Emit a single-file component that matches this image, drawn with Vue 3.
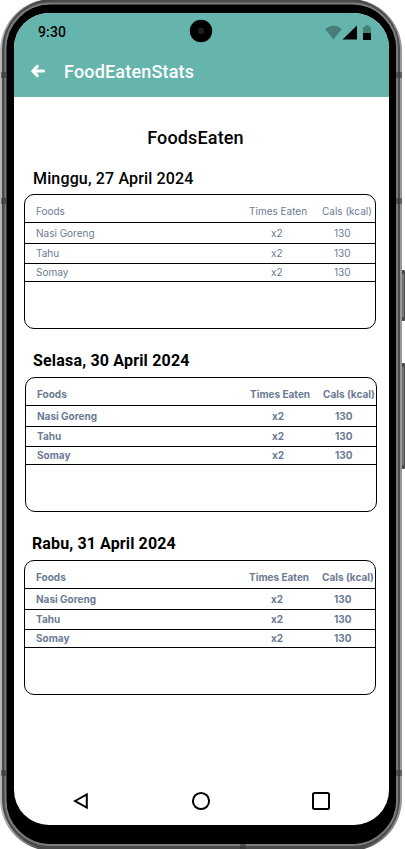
<script setup>
const foods = [
  { name: 'Nasi Goreng', times: 'x2', cals: '130' },
  { name: 'Tahu', times: 'x2', cals: '130' },
  { name: 'Somay', times: 'x2', cals: '130' },
]
const days = [
  { date: 'Minggu, 27 April 2024', variant: 'regular', foods },
  { date: 'Selasa, 30 April 2024', variant: 'bold shifted', foods },
  { date: 'Rabu, 31 April 2024', variant: 'bold last', foods },
]
</script>

<template>
  <div class="device">
    <svg class="frame" width="405" height="849" viewBox="0 0 405 849">
      <defs>
        <linearGradient id="side" x1="0" x2="1" y1="0" y2="0">
          <stop offset="0" stop-color="#b9bbba" />
          <stop offset=".1" stop-color="#4a4a4a" />
          <stop offset=".9" stop-color="#4a4a4a" />
          <stop offset="1" stop-color="#9a9a9b" />
        </linearGradient>
      </defs>
      <g fill="#4c4b4b">
        <rect x="400" y="270" width="5" height="51" rx="1" />
        <rect x="400" y="363" width="5" height="106" rx="1" />
      </g>
      <g fill="#777677">
        <rect x="402" y="274" width="2" height="43" />
        <rect x="402" y="367" width="2" height="98" />
      </g>
      <rect x="0" y="-1" width="402" height="852" rx="52" fill="url(#side)" />
      <rect x="2.5" y=".5" width="397" height="848" rx="49" fill="#4a4a4b" stroke="#4a4a4a" />
      <rect x="5.500" y="3.500" width="391.500" height="841.500" rx="45" fill="#000" stroke="#7b7a7c" stroke-width="2" />
      <rect x="7" y="5" width="389" height="839" rx="44" fill="#000" />
      <g fill="#333" opacity=".55">
        <rect x="1" y="72" width="6" height="6" />
        <rect x="1" y="198" width="6" height="6" />
        <rect x="1" y="770" width="6" height="6" />
        <rect x="396" y="72" width="6" height="6" />
        <rect x="396" y="198" width="6" height="6" />
        <rect x="396" y="770" width="6" height="6" />
        <rect x="240" y="844" width="6" height="5" />
      </g>
    </svg>

    <main class="screen">
      <header class="topbar">
        <div class="status">
          <span class="time">9:30</span>
          <svg class="status-icons" width="48" height="18" viewBox="0 0 48 18">
            <path d="M0 5Q8.500-2 17 5L8.500 15.500Z" fill="#000" opacity=".3" />
            <path d="M17.500 15.600L32 1.500V15.600Z" />
            <path d="M38 3H40V1.200H44V3H46V9H38Z" opacity=".3" />
            <path d="M38 9H46V16H38Z" />
          </svg>
        </div>
        <div class="titlebar">
          <svg class="back" width="14" height="14" viewBox="0 0 14 14">
            <path d="M6.300 2.400L1.800 7L6.300 11.600M2.500 7H12.500" fill="none" stroke="#fff" stroke-width="3" stroke-linecap="round" stroke-linejoin="round" />
          </svg>
          <span class="app-title">FoodEatenStats</span>
        </div>
      </header>

      <h1>FoodsEaten</h1>

      <section v-for="day in days" :key="day.date" class="day" :class="day.variant">
        <h2>{{ day.date }}</h2>
        <div class="table">
          <div class="row head">
            <span>Foods</span><span class="times">Times Eaten</span><span class="cals">Cals (kcal)</span>
          </div>
          <div v-for="food in day.foods" :key="food.name" class="row">
            <span>{{ food.name }}</span><span class="times value">{{ food.times }}</span><span class="cals value">{{ food.cals }}</span>
          </div>
        </div>
      </section>

      <nav class="navbar">
        <svg width="20" height="20" viewBox="0 0 20 20"><path d="M4 10L15.800 3.400V16.600Z" /></svg>
        <svg width="20" height="20" viewBox="0 0 20 20"><circle cx="10" cy="10" r="8.100" /></svg>
        <svg width="20" height="20" viewBox="0 0 20 20"><rect x="2" y="2" width="16" height="16" rx="1.500" /></svg>
      </nav>
    </main>

    <svg class="camera" width="24" height="24" viewBox="0 0 24 24">
      <circle cx="12" cy="12" r="11.200" />
      <circle cx="12" cy="12" r="3.500" fill="#141212" />
      <path d="M10 10.500Q12 9 14 10.500M10 13H14" fill="none" stroke="#352a29" />
    </svg>
  </div>
</template>

<style>
body { margin: 0; overflow: hidden; background: #fff; }
</style>

<style scoped>
.device {
  position: relative;
  width: 405px;
  height: 849px;
  box-sizing: border-box;
  padding: 13px 16px 24px 14px;
  overflow: hidden;
  font-family: Roboto, sans-serif;
}
.frame { position: absolute; left: 0; top: 0; }
.camera { position: absolute; left: 189px; top: 19px; }
.screen {
  position: relative;
  display: flex;
  flex-direction: column;
  width: 375px;
  height: 812px;
  border-radius: 35px;
  overflow: hidden;
  background: #fff;
}
.topbar { height: 84px; flex: none; background: #65b5ac; }
.status {
  display: flex;
  justify-content: space-between;
  padding: 11px 16px 0 24px;
  height: 18px;
}
.time { font-size: 14px; line-height: 16px; font-weight: 500; letter-spacing: .14px; }
.titlebar {
  display: flex;
  align-items: center;
  height: 24px;
  padding: 18px 0 0 17px;
}
.back { margin-top: -2px; }
.app-title {
  margin-left: 19px;
  color: #fff;
  font-size: 18px;
  line-height: 24px;
  font-weight: 500;
  letter-spacing: .18px;
}
h1 {
  margin: 29px 0 0;
  padding-right: 12px;
  height: 24px;
  font-size: 18px;
  line-height: 24px;
  font-weight: 500;
  letter-spacing: .15px;
  text-align: center;
}
.day { padding: 15px 0 0 10px; height: 168px; flex: none; }
h2 {
  margin: 0 0 0 9px;
  height: 29px;
  font-size: 16px;
  line-height: 27px;
  font-weight: 500;
  letter-spacing: .15px;
  white-space: nowrap;
}
.table {
  box-sizing: border-box;
  width: 352px;
  height: 135px;
  border: 1px solid #000;
  border-radius: 10px;
  font: 400 10px/12px Inter, sans-serif;
  color: #6b7b93;
}
.row {
  display: grid;
  grid-template-columns: 213px 73px 60px;
  box-sizing: border-box;
  height: 18px;
  padding: 2px 0 0 11px;
  border-bottom: 1px solid #000;
  white-space: nowrap;
}
.row.head { height: 28px; padding-top: 10px; }
.row:nth-child(2) { height: 21px; padding-top: 4px; }
.row:nth-child(3) { height: 20px; padding-top: 3px; }
.times.value { padding-left: 22px; }
.cals.value { padding-left: 12px; }
.bold h2 { line-height: 25px; font-weight: 700; }
.bold .table { font-weight: 700; }
.shifted { padding-left: 11px; }
.shifted h2 { margin-left: 8px; letter-spacing: .18px; }
.last h2 { margin-left: 8px; letter-spacing: .12px; }
.navbar {
  display: flex;
  justify-content: space-between;
  width: 260px;
  height: 20px;
  margin: auto 0 14px 57px;
}
.navbar svg { fill: none; stroke: #000; stroke-width: 2; }
</style>
